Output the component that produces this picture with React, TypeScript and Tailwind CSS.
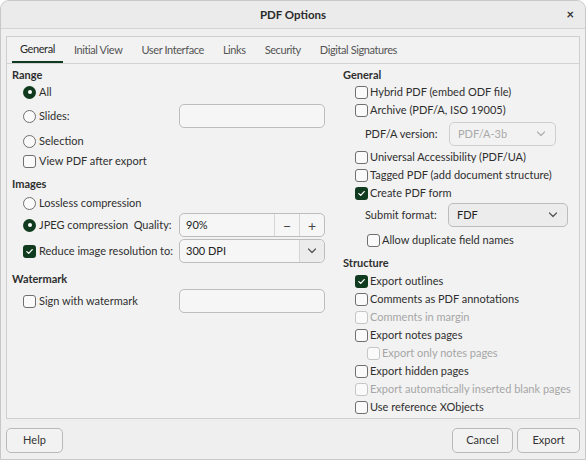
import React from 'react'

const font = { fontFamily: 'Lato, "Noto Sans", sans-serif' }

function Check({ on = false, off = false }: { on?: boolean; off?: boolean }) {
    if (on) {
        return (
            <span className="flex h-[13px] w-[13px] shrink-0 items-center justify-center rounded-[3px] bg-[#113b1f]">
                <svg width="9" height="9" viewBox="0 0 9 9" fill="none">
                    <path d="M1.8 4.6 L3.7 6.4 L7.2 2.6" stroke="#fff" strokeWidth="1.3" strokeLinecap="round" strokeLinejoin="round" />
                </svg>
            </span>
        )
    }
    return (
        <span className={`h-[13px] w-[13px] shrink-0 rounded-[3px] border bg-[#fafafa] ${off ? 'border-[#c6c6c6]' : 'border-[#6f6f6f]'}`} />
    )
}

function Radio({ on = false }: { on?: boolean }) {
    if (on) {
        return (
            <span className="flex h-[13px] w-[13px] shrink-0 items-center justify-center rounded-full bg-[#113b1f]">
                <span className="h-[4px] w-[4px] rounded-full bg-white" />
            </span>
        )
    }
    return <span className="h-[13px] w-[13px] shrink-0 rounded-full border border-[#6f6f6f] bg-[#fafafa]" />
}

function Chevron({ color = '#555' }: { color?: string }) {
    return (
        <svg width="10" height="6" viewBox="0 0 10 6" fill="none">
            <path d="M1.5 1 L5 4.5 L8.5 1" stroke={color} strokeWidth="1.2" strokeLinecap="round" strokeLinejoin="round" />
        </svg>
    )
}

function CheckRow({ label, on, off, indent }: { label: string; on?: boolean; off?: boolean; indent?: boolean }) {
    return (
        <div className={`flex h-[18px] items-center gap-[2px] whitespace-nowrap ${indent ? 'pl-[24px]' : 'pl-[12px]'}`}>
            <Check on={on} off={off} />
            <span className={off ? 'text-[#a6a6a6]' : ''}>{label}</span>
        </div>
    )
}

export default function App() {
    const tabs = ['General', 'Initial View', 'User Interface', 'Links', 'Security', 'Digital Signatures']
    return (
        <div className="h-[462px] w-[586px] bg-white text-[11px] text-[#2f2f2f]" style={font}>
            <div className="flex h-[460px] flex-col rounded-t-[9px] border border-[#c8c8c8] bg-[#efefef]">
                {/* title bar */}
                <div className="relative flex h-[28px] shrink-0 items-center justify-center rounded-t-[9px] border-b border-[#d4d4d4] bg-[#ebebeb]">
                    <span className="text-[11.5px] font-bold text-[#2a2a2a]">PDF Options</span>
                    <span className="absolute right-[11px] top-[7px] text-[13px] font-bold leading-none text-[#333]">×</span>
                </div>

                {/* tab frame */}
                <div className="mx-[5px] mt-[7px] flex h-[383px] flex-col border border-[#cfcfcf] bg-[#f2f2f2]">
                    <div className="flex h-[27px] shrink-0 items-end gap-[3px] border-b border-[#d2d2d2] pl-[5px] tracking-[-0.4px]">
                        {tabs.map((t, i) => (
                            <div key={t} className={`flex h-full items-center px-[8px] pt-[1px] ${i === 0 ? 'border-b-2 border-[#113b1f] text-[#2a2a2a]' : 'text-[#555]'}`}>
                                {t}
                            </div>
                        ))}
                    </div>

                    <div className="flex flex-1 whitespace-nowrap px-[5px]">
                        {/* left column */}
                        <div className="flex w-[320px] flex-col">
                            <div className="mt-[3px] flex h-[16px] items-center font-bold">Range</div>
                            <div className="flex h-[18px] items-center gap-[3px] pl-[11px]">
                                <Radio on />
                                <span>All</span>
                            </div>
                            <div className="mt-[3px] flex h-[24px] items-center">
                                <div className="flex w-[167px] items-center gap-[3px] pl-[11px]">
                                    <Radio />
                                    <span>Slides:</span>
                                </div>
                                <div className="h-[24px] w-[146px] rounded-[5px] border border-[#bdbdbd] bg-[#f6f6f6]" />
                            </div>
                            <div className="mt-[4px] flex h-[18px] items-center gap-[3px] pl-[11px]">
                                <Radio />
                                <span>Selection</span>
                            </div>
                            <div className="mt-[2px] flex h-[18px] items-center gap-[3px] pl-[11px]">
                                <Check />
                                <span>View PDF after export</span>
                            </div>

                            <div className="mt-[6px] flex h-[16px] items-center font-bold">Images</div>
                            <div className="mt-[2px] flex h-[18px] items-center gap-[3px] pl-[11px]">
                                <Radio />
                                <span>Lossless compression</span>
                            </div>
                            <div className="mt-[1px] flex h-[24px] items-center">
                                <div className="flex w-[167px] items-center gap-[3px] pl-[11px]">
                                    <Radio on />
                                    <span>JPEG compression&nbsp;&nbsp;Quality:</span>
                                </div>
                                <div className="flex h-[24px] w-[146px] items-center rounded-[5px] border border-[#bdbdbd] bg-[#f6f6f6]">
                                    <span className="flex-1 pl-[6px] text-[#222]">90%</span>
                                    <span className="flex h-full w-[25px] items-center justify-center border-l border-[#d6d6d6] text-[14px] text-[#444]">−</span>
                                    <span className="flex h-full w-[25px] items-center justify-center border-l border-[#d6d6d6] text-[14px] text-[#444]">+</span>
                                </div>
                            </div>
                            <div className="mt-[2px] flex h-[24px] items-center">
                                <div className="flex w-[167px] items-center gap-[3px] pl-[11px]">
                                    <Check on />
                                    <span>Reduce image resolution to:</span>
                                </div>
                                <div className="flex h-[24px] w-[146px] items-center rounded-[5px] border border-[#bdbdbd] bg-[#f6f6f6]">
                                    <span className="flex-1 pl-[6px] text-[#222]">300 DPI</span>
                                    <span className="flex h-full w-[25px] items-center justify-center rounded-r-[5px] border-l border-[#d6d6d6] bg-[#ececec]">
                                        <Chevron />
                                    </span>
                                </div>
                            </div>

                            <div className="mt-[8px] flex h-[16px] items-center font-bold">Watermark</div>
                            <div className="mt-[2px] flex h-[24px] items-center">
                                <div className="flex w-[167px] items-center gap-[3px] pl-[11px]">
                                    <Check />
                                    <span>Sign with watermark</span>
                                </div>
                                <div className="h-[24px] w-[146px] rounded-[5px] border border-[#bdbdbd] bg-[#f6f6f6]" />
                            </div>
                        </div>

                        {/* right column */}
                        <div className="flex flex-1 flex-col pl-[11px]">
                            <div className="mt-[3px] flex h-[16px] items-center font-bold">General</div>
                            <div>
                                <CheckRow label="Hybrid PDF (embed ODF file)" />
                                <CheckRow label="Archive (PDF/A, ISO 19005)" />
                            </div>
                            <div className="mt-[3px] flex h-[24px] items-center pl-[22px]">
                                <span className="w-[84px]">PDF/A version:</span>
                                <div className="flex h-[24px] w-[107px] items-center justify-between rounded-[5px] border border-[#cfcfcf] pl-[8px] pr-[9px] text-[#a9a9a9]">
                                    <span>PDF/A-3b</span>
                                    <Chevron color="#b0b0b0" />
                                </div>
                            </div>
                            <div className="mt-[2px]">
                                <CheckRow label="Universal Accessibility (PDF/UA)" />
                                <CheckRow label="Tagged PDF (add document structure)" />
                                <CheckRow label="Create PDF form" on />
                            </div>
                            <div className="mt-[1px] flex h-[24px] items-center pl-[22px]">
                                <span className="w-[83px]">Submit format:</span>
                                <div className="flex h-[24px] w-[120px] items-center justify-between rounded-[5px] border border-[#bdbdbd] bg-[#ececec] pl-[8px] pr-[9px] text-[#222]">
                                    <span>FDF</span>
                                    <Chevron />
                                </div>
                            </div>
                            <div className="mt-[4px]">
                                <CheckRow label="Allow duplicate field names" indent />
                            </div>

                            <div className="mt-[6px] flex h-[16px] items-center font-bold">Structure</div>
                            <div className="mt-[1px]">
                                <CheckRow label="Export outlines" on />
                                <CheckRow label="Comments as PDF annotations" />
                                <CheckRow label="Comments in margin" off />
                                <CheckRow label="Export notes pages" />
                                <CheckRow label="Export only notes pages" off indent />
                                <CheckRow label="Export hidden pages" />
                                <CheckRow label="Export automatically inserted blank pages" off />
                                <CheckRow label="Use reference XObjects" />
                            </div>
                        </div>
                    </div>
                </div>

                {/* buttons */}
                <div className="mt-[9px] flex items-center px-[5px]">
                    <button className="h-[25px] w-[57px] rounded-[5px] border border-[#b9b9b9] bg-[#f2f2f2] text-[11px] text-[#333]">Help</button>
                    <div className="flex-1" />
                    <button className="h-[25px] w-[61px] rounded-[5px] border border-[#b9b9b9] bg-[#f2f2f2] text-[11px] text-[#333]">Cancel</button>
                    <button className="ml-[4px] h-[25px] w-[63px] rounded-[5px] border border-[#b9b9b9] bg-[#f2f2f2] text-[11px] text-[#333]">Export</button>
                </div>
            </div>
        </div>
    )
}
